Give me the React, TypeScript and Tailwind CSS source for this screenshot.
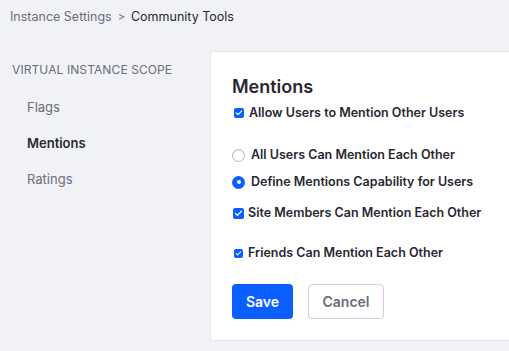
import { Check } from "lucide-react";

const font = { fontFamily: "Inter, 'Liberation Sans', sans-serif" };

function Checkbox({ size }: { size: number }) {
  return (
    <span
      className="flex items-center justify-center rounded-[2px] bg-[#0b5fff] shrink-0"
      style={{ width: size, height: size }}
    >
      <Check className="text-white" style={{ width: size - 2, height: size - 2 }} strokeWidth={3.5} />
    </span>
  );
}

function Radio({ checked }: { checked?: boolean }) {
  return checked ? (
    <span className="flex h-[13px] w-[13px] shrink-0 items-center justify-center rounded-full bg-[#0b5fff]">
      <span className="h-[4px] w-[4px] rounded-full bg-white" />
    </span>
  ) : (
    <span className="h-[13px] w-[13px] shrink-0 rounded-full border border-[#b3b5c4] bg-white shadow-[inset_0_1px_1px_rgba(0,0,0,0.08)]" />
  );
}

export default function App() {
  return (
    <div className="h-[351px] w-[509px] overflow-hidden bg-[#f1f2f5] text-[#272833]" style={font}>
      <div className="flex h-[34px] items-center pl-[10px] text-[12.5px]">
        <span className="text-[#6b6c7e]">Instance Settings</span>
        <span className="mx-[6px] text-[11px] text-[#6b6c7e]">&gt;</span>
        <span className="text-[#272833]">Community Tools</span>
      </div>

      <div className="flex">
        <div className="w-[210px] shrink-0 pt-[26px]">
          <div className="pl-[12px] text-[12px] leading-[20px] tracking-[0.1px] text-[#6b6c7e]">
            VIRTUAL INSTANCE SCOPE
          </div>
          <ul className="mt-[17px] flex flex-col gap-[16px] pl-[27px] text-[13px] leading-[20px]">
            <li className="text-[#6b6c7e]">Flags</li>
            <li className="font-semibold text-[#272833]">Mentions</li>
            <li className="text-[#6b6c7e]">Ratings</li>
          </ul>
        </div>

        <div className="mt-[17px] flex-1 rounded-l-[4px] border border-r-0 border-[#e7e7ed] bg-white pl-[21px] pt-[23px] pb-[21px]">
          <h2 className="text-[18px] font-semibold leading-[24px]">Mentions</h2>

          <label className="mt-[4px] flex h-[20px] items-center gap-[5px] pl-[2px] text-[12.5px] font-semibold">
            <Checkbox size={10} />
            Allow Users to Mention Other Users
          </label>

          <label className="mt-[22px] flex h-[20px] items-center gap-[6px] text-[12.5px] font-semibold">
            <Radio />
            All Users Can Mention Each Other
          </label>

          <label className="mt-[7px] flex h-[20px] items-center gap-[6px] text-[12.5px] font-semibold">
            <Radio checked />
            Define Mentions Capability for Users
          </label>

          <label className="mt-[11px] flex h-[20px] items-center gap-[4px] pl-[1px] text-[12.5px] font-semibold">
            <Checkbox size={11} />
            Site Members Can Mention Each Other
          </label>

          <label className="mt-[20px] flex h-[20px] items-center gap-[5px] pl-[2px] text-[12.5px] font-semibold">
            <Checkbox size={9} />
            Friends Can Mention Each Other
          </label>

          <div className="mt-[21px] flex gap-[15px]">
            <button className="h-[35px] w-[61px] rounded-[4px] bg-[#0b5fff] text-[14px] font-semibold text-white">
              Save
            </button>
            <button className="h-[35px] w-[76px] rounded-[4px] border border-[#cdced9] bg-white text-[14px] font-semibold text-[#6b6c7e]">
              Cancel
            </button>
          </div>
        </div>
      </div>
    </div>
  );
}
